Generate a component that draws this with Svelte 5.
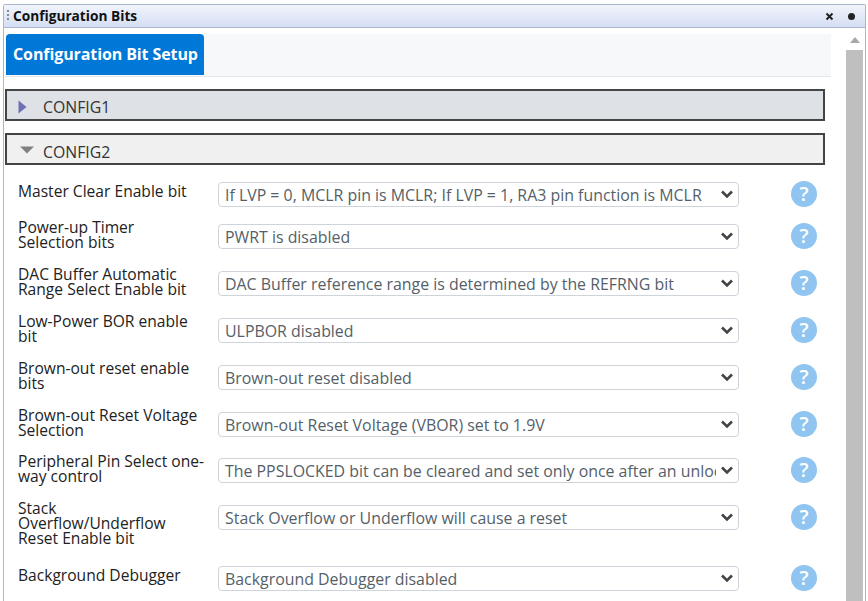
<script>
  // Configuration rows, top to bottom. Labels break where the original column wraps them.
  const rows = [
    { label: 'Master Clear Enable bit', value: 'If LVP = 0, MCLR pin is MCLR; If LVP = 1, RA3 pin function is MCLR' },
    { label: 'Power-up Timer\nSelection bits', value: 'PWRT is disabled' },
    { label: 'DAC Buffer Automatic\nRange Select Enable bit', value: 'DAC Buffer reference range is determined by the REFRNG bit' },
    { label: 'Low-Power BOR enable\nbit', value: 'ULPBOR disabled' },
    { label: 'Brown-out reset enable\nbits', value: 'Brown-out reset disabled' },
    { label: 'Brown-out Reset Voltage\nSelection', value: 'Brown-out Reset Voltage (VBOR) set to 1.9V' },
    { label: 'Peripheral Pin Select one-\nway control', value: 'The PPSLOCKED bit can be cleared and set only once after an unlock' },
    { label: 'Stack\nOverflow/Underflow\nReset Enable bit', value: 'Stack Overflow or Underflow will cause a reset' },
    { label: 'Background Debugger', value: 'Background Debugger disabled' }
  ];
</script>

<div class="window">
  <div class="titlebar">
    <span class="grip"></span>
    <span class="title">Configuration Bits</span>
    <svg class="close" width="9" height="9" viewBox="0 0 9 9">
      <path d="M1.5 1.5 L7.5 7.5 M7.5 1.5 L1.5 7.5" stroke="#222" stroke-width="2" />
    </svg>
    <span class="pin"></span>
  </div>

  <div class="body">
    <div class="content">
      <div class="tabs">
        <div class="tab">Configuration Bit Setup</div>
      </div>

      <div class="section closed">
        <svg width="9" height="14" viewBox="0 0 9 14"><path d="M0.5 0.5 L8.5 7 L0.5 13.5 Z" fill="#6f6fb4" /></svg>
        <span>CONFIG1</span>
      </div>
      <div class="section open">
        <svg width="14" height="8" viewBox="0 0 14 8"><path d="M0 0.5 L14 0.5 L7 7.5 Z" fill="#808080" /></svg>
        <span>CONFIG2</span>
      </div>

      <div class="rows">
        {#each rows as row}
          <div class="row">
            <div class="label" class:single={!row.label.includes('\n')}>{row.label}</div>
            <div class="select-wrap">
              <select>
                <option>{row.value}</option>
              </select>
              <svg class="chevron" width="14" height="9" viewBox="0 0 14 9">
                <path d="M2 1.5 L7 6.5 L12 1.5" fill="none" stroke="#444" stroke-width="2.6" />
              </svg>
            </div>
            <div class="help">?</div>
          </div>
        {/each}
      </div>
    </div>

    <div class="scrollbar">
      <svg width="10" height="6" viewBox="0 0 10 6"><path d="M0 6 L5 0 L10 6 Z" fill="#a8a8a8" /></svg>
      <div class="thumb"></div>
    </div>
  </div>
</div>

<style>
  :global(body) {
    background: #fff;
    overflow: hidden;
  }

  .window {
    box-sizing: border-box;
    width: 863px;
    height: 597px;
    margin: 4px 0 0 3px;
    border: 1px solid #a9b7cc;
    border-bottom: none;
    border-radius: 2px 2px 0 0;
    background: #fff;
    font-family: "Open Sans", sans-serif;
    overflow: hidden;
  }

  .titlebar {
    display: flex;
    align-items: center;
    height: 23px;
    box-sizing: border-box;
    padding: 0 10px 0 3px;
    background: linear-gradient(#f1f4fc, #d5def3);
    border-bottom: 1px solid #a9b7cc;
  }

  .grip {
    width: 2px;
    height: 12px;
    margin-right: 4px;
    background: repeating-linear-gradient(#8a8a8a 0 2px, transparent 2px 4px);
  }

  .title {
    flex: 1;
    margin-top: -2px;
    font-size: 13.7px;
    font-weight: 700;
    color: #111;
  }

  .close {
    margin-right: 14px;
  }

  .pin {
    width: 7px;
    height: 7px;
    border-radius: 50%;
    background: #222;
  }

  .body {
    display: flex;
    height: 573px;
  }

  .content {
    width: 826px;
    margin-left: 1px;
    flex: none;
  }

  .tabs {
    height: 42px;
    margin-top: 6px;
    padding-left: 1px;
    background: #f7f8fa;
    border-bottom: 1px solid #e4e7eb;
  }

  .tab {
    display: inline-block;
    box-sizing: border-box;
    width: 198px;
    height: 41px;
    padding-left: 7px;
    line-height: 41px;
    background: #0078d7;
    border-radius: 4px 4px 0 0;
    color: #fff;
    font-size: 16px;
    font-weight: 700;
    letter-spacing: -0.1px;
    white-space: nowrap;
  }

  .section {
    display: flex;
    align-items: center;
    box-sizing: border-box;
    width: 820px;
    height: 32px;
    margin-top: 12px;
    border: 2px solid #444;
    color: #333;
    font-size: 15.8px;
  }

  .section span {
    padding-top: 3px;
  }

  .section.closed {
    padding-left: 11px;
    background: #dee1e5;
  }

  .section.open {
    padding-left: 13px;
    background: #f0f0f0;
  }

  .section.open span {
    padding-top: 5px;
  }

  .section.closed svg {
    margin-top: 3px;
    margin-right: 16px;
  }

  .section.open svg {
    margin-top: 1px;
    margin-right: 9px;
  }

  .rows {
    margin-top: 17px;
  }

  .row {
    display: grid;
    grid-template-columns: 200px 521px 1fr;
    align-items: start;
    min-height: 47px;
    padding-left: 13px;
  }

  .row:first-child {
    min-height: 42px;
  }

  .row:nth-child(6) {
    min-height: 46px;
  }

  .row:nth-child(8) {
    min-height: 61px;
  }

  .label {
    margin-top: -4px;
    font-size: 15.6px;
    line-height: 15px;
    color: #222;
    white-space: pre-line;
  }

  .label.single {
    margin-top: 2px;
  }

  .select-wrap {
    position: relative;
  }

  select {
    display: block;
    box-sizing: border-box;
    width: 100%;
    height: 25px;
    padding: 0 22px 0 6px;
    appearance: none;
    border: 1px solid #ced4da;
    border-radius: 4px;
    background: #fff;
    color: #555f69;
    font-family: inherit;
    font-size: 15.9px;
  }

  .chevron {
    position: absolute;
    top: 8px;
    right: 5px;
  }

  .help {
    width: 26px;
    height: 26px;
    margin: -1px 0 0 52px;
    border-radius: 50%;
    background: #8fc5f0;
    color: #fff;
    font-size: 20px;
    font-weight: 600;
    line-height: 26px;
    text-align: center;
  }

  .scrollbar {
    display: flex;
    flex-direction: column;
    align-items: center;
    width: 17px;
    margin-left: 15px;
    flex: none;
  }

  .scrollbar svg {
    flex: none;
    margin: 9px 0 7px;
  }

  .thumb {
    width: 17px;
    flex: 1;
    background: #bfbfbf;
  }
</style>
